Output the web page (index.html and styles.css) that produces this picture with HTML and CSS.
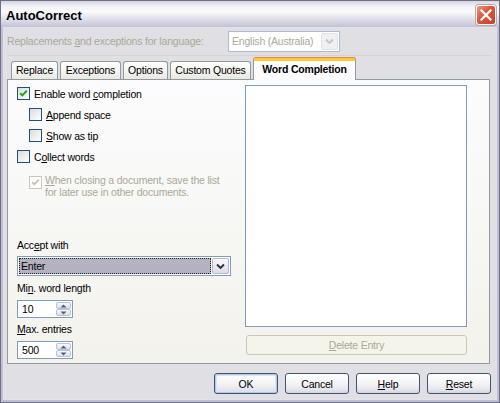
FILE: index.html
```html
<!DOCTYPE html>
<html>
<head>
<meta charset="utf-8">
<link rel="stylesheet" href="styles.css">
</head>
<body>
<div class="window">
  <div class="titlebar">
    <span class="title">AutoCorrect</span>
    <span class="close"><svg width="12" height="12" viewBox="0 0 12 12"><path d="M1.5 1.5 L10.5 10.5 M10.5 1.5 L1.5 10.5" stroke="#fff" stroke-width="2.2" stroke-linecap="square"/></svg></span>
  </div>
  <div class="client">
    <div class="langrow">
      <span class="langlbl dis">Replacements <u>a</u>nd exceptions for language:</span>
      <div class="combo combo-dis">
        <span class="combo-text dis">English (Australia)</span>
        <span class="ddbtn ddbtn-dis"><svg width="9" height="7" viewBox="0 0 9 7"><path d="M1 1.5 L4.5 5 L8 1.5" fill="none" stroke="#c3c3cc" stroke-width="1.8"/></svg></span>
      </div>
    </div>
    <div class="tabs">
      <div class="tab t-replace">Replace</div>
      <div class="tab t-exc">Exceptions</div>
      <div class="tab t-opt">Options</div>
      <div class="tab t-cq">Custom Quotes</div>
      <div class="tab active t-wc">Word Completion</div>
    </div>
    <div class="panel">
      <div class="leftcol">
        <div class="cbrow">
          <span class="cb"><svg width="11" height="11" viewBox="0 0 11 11"><path d="M2.2 5.2 L4.3 7.4 L8.8 2.8" fill="none" stroke="#21a121" stroke-width="2"/></svg></span>
          <span>Enable word <u>c</u>ompletion</span>
        </div>
        <div class="cbrow indent">
          <span class="cb"></span>
          <span><u>A</u>ppend space</span>
        </div>
        <div class="cbrow indent">
          <span class="cb"></span>
          <span><u>S</u>how as tip</span>
        </div>
        <div class="cbrow">
          <span class="cb"></span>
          <span>C<u>o</u>llect words</span>
        </div>
        <div class="cbrow2 indent">
          <span class="cb cb-dis"><svg width="11" height="11" viewBox="0 0 11 11"><path d="M2.2 5.2 L4.3 7.4 L8.8 2.8" fill="none" stroke="#cac8bb" stroke-width="2"/></svg></span>
          <span class="dis multiline"><u>W</u>hen closing a document, save the list<br>for later use in other documents.</span>
        </div>
        <div class="lbl lbl-accept">Acc<u>e</u>pt with</div>
        <div class="combo combo-enter">
          <span class="combo-sel">Enter</span>
          <span class="ddbtn"><svg width="9" height="7" viewBox="0 0 9 7"><path d="M1 1.5 L4.5 5 L8 1.5" fill="none" stroke="#2b2b3a" stroke-width="1.8"/></svg></span>
        </div>
        <div class="lbl lbl-min">Mi<u>n</u>. word length</div>
        <div class="spin">
          <span class="spin-text">10</span>
          <span class="spinbtns">
            <span class="sb"><svg width="7" height="4" viewBox="0 0 7 4"><path d="M0.5 3.5 L3.5 0.5 L6.5 3.5Z" fill="#4d6185"/></svg></span>
            <span class="sb"><svg width="7" height="4" viewBox="0 0 7 4"><path d="M0.5 0.5 L3.5 3.5 L6.5 0.5Z" fill="#4d6185"/></svg></span>
          </span>
        </div>
        <div class="lbl lbl-max"><u>M</u>ax. entries</div>
        <div class="spin spin2">
          <span class="spin-text">500</span>
          <span class="spinbtns">
            <span class="sb"><svg width="7" height="4" viewBox="0 0 7 4"><path d="M0.5 3.5 L3.5 0.5 L6.5 3.5Z" fill="#4d6185"/></svg></span>
            <span class="sb"><svg width="7" height="4" viewBox="0 0 7 4"><path d="M0.5 0.5 L3.5 3.5 L6.5 0.5Z" fill="#4d6185"/></svg></span>
          </span>
        </div>
      </div>
      <div class="rightcol">
        <div class="listbox"></div>
        <div class="btn btn-dis del"><span><u>D</u>elete Entry</span></div>
      </div>
    </div>
    <div class="buttons">
      <div class="btn default">OK</div>
      <div class="btn">Cancel</div>
      <div class="btn"><span><u>H</u>elp</span></div>
      <div class="btn"><span><u>R</u>eset</span></div>
    </div>
  </div>
</div>
</body>
</html>
```
FILE: styles.css
```css
* { box-sizing: border-box; }
html, body { margin: 0; padding: 0; }
body {
  width: 500px;
  height: 403px;
  overflow: hidden;
  font-family: "Liberation Sans", Arial, sans-serif;
  font-size: 10.5px;
  letter-spacing: -0.2px;
  color: #000;
  background: #c4c3d5;
  white-space: nowrap;
}
u { text-decoration: underline; text-underline-offset: 1px; }
.window {
  width: 500px;
  height: 403px;
  border: 1px solid #6f6e88;
  background: #c0bfd2;
  display: flex;
  flex-direction: column;
}
.titlebar {
  height: 27px;
  flex: none;
  display: flex;
  align-items: center;
  justify-content: space-between;
  padding: 0 3px 0 5px;
  background: linear-gradient(#d6d6e2 0%, #f2f2f7 20%, #fafafc 40%, #e6e6ee 60%, #cfcedd 85%, #bdbccf 100%);
}
.title { font-weight: bold; font-size: 13px; letter-spacing: 0; color: #000; padding-top: 1px; }
.close {
  width: 20px;
  height: 20px;
  border: 1px solid #fff;
  border-radius: 3px;
  background: linear-gradient(135deg, #ec9c84 0%, #dc5a3e 40%, #c8402a 100%);
  box-shadow: 0 0 0 1px #c9a4a4;
  display: flex;
  align-items: center;
  justify-content: center;
}
.client {
  flex: 1;
  margin: 0 3px 3px;
  background: #e0dfe3;
  display: flex;
  flex-direction: column;
  padding: 0 5px 0 3px;
  box-shadow: 0 0 0 1px #e4e3ec;
}
.dis { color: #aca899; }
.langrow {
  height: 28px;
  flex: none;
  display: flex;
  align-items: flex-start;
  padding-top: 3px;
  border-bottom: 1px solid #d4d3dc;
}
.langlbl { width: 221px; height: 21px; line-height: 21px; }
.combo {
  display: flex;
  align-items: stretch;
  border: 1px solid #7f9db9;
  background: #fff;
  flex: none;
}
.combo-dis {
  width: 112px;
  height: 21px;
  border-color: #a9bcd4;
  padding: 1px;
}
.combo-text { flex: 1; line-height: 17px; padding-left: 2px; }
.ddbtn {
  width: 17px;
  flex: none;
  display: flex;
  align-items: center;
  justify-content: center;
  border: 1px solid #b4b8d0;
  border-radius: 2px;
  background: linear-gradient(#f8f8fb, #dcdce6);
}
.ddbtn-dis {
  border-color: #e2e1e8;
  background: #f0f0f2;
}
.tabs {
  margin-top: 2px;
  height: 22px;
  flex: none;
  display: flex;
  align-items: flex-end;
  padding-left: 4px;
  margin-bottom: -1px;
}
.tab {
  height: 18px;
  flex: none;
  margin-bottom: 1px;
  margin-right: 2px;
  border: 1px solid #919b9c;
  border-bottom: none;
  border-radius: 3px 3px 0 0;
  background: linear-gradient(#ffffff, #f3f3ef 60%, #e9e8e2);
  text-align: center;
  line-height: 17px;
}
.t-replace { width: 47px; }
.t-exc { width: 61px; }
.t-opt { width: 45px; }
.t-cq { width: 81px; }
.t-wc { width: 103px; }
.tab.active {
  position: relative;
  z-index: 1;
  height: 22px;
  margin-bottom: 0;
  border-top: 3px solid #ffc83c;
  box-shadow: 0 -1px 0 #e68b2c;
  background: #fcfcfe;
  font-weight: bold;
  line-height: 17px;
}
.panel {
  width: 483px;
  height: 285px;
  flex: none;
  border: 1px solid #919b9c;
  background: linear-gradient(#fcfcfe 0%, #f8f8f6 40%, #f3f2ec 100%);
  display: flex;
}
.leftcol {
  width: 214px;
  flex: none;
  margin-left: 9px;
  padding-top: 3px;
  display: flex;
  flex-direction: column;
}
.leftcol > * { flex: none; }
.cbrow {
  height: 21px;
  display: flex;
  align-items: center;
  gap: 4px;
}
.cbrow2 {
  margin-top: 5px;
  display: flex;
  align-items: flex-start;
  gap: 3px;
}
.cbrow2 .cb { margin-top: 4px; }
.multiline { line-height: 12px; padding-top: 2px; }
.indent { padding-left: 12px; }
.cb {
  width: 13px;
  height: 13px;
  flex: none;
  border: 1px solid #1c5180;
  background: linear-gradient(135deg, #dcdcd7, #ffffff);
  display: flex;
  align-items: center;
  justify-content: center;
}
.cb-dis { border-color: #cac8bb; background: #fff; }
.lbl { height: 13px; line-height: 13px; }
.lbl-accept { margin-top: 41px; }
.combo-enter {
  margin-top: 4px;
  width: 214px;
  height: 20px;
  padding: 1px;
}
.combo-sel {
  flex: 1;
  background: #b3b2be;
  border: 1px dotted #222;
  line-height: 14px;
  padding-left: 1px;
  margin-right: 1px;
}
.lbl-min { margin-top: 6px; }
.lbl-max { margin-top: 5px; }
.spin {
  margin-top: 5px;
  width: 56px;
  height: 18px;
  border: 1px solid #7f9db9;
  background: #fff;
  display: flex;
  padding: 1px;
}
.spin2 { margin-top: 5px; }
.spin-text { flex: 1; line-height: 14px; padding-left: 3px; }
.spinbtns { width: 15px; display: flex; flex-direction: column; }
.sb {
  flex: 1;
  border: 1px solid #b7c3da;
  border-radius: 2px;
  background: linear-gradient(#fafafc, #dcdce6);
  display: flex;
  align-items: center;
  justify-content: center;
}
.rightcol {
  width: 222px;
  flex: none;
  margin-left: 14px;
  padding-top: 5px;
  display: flex;
  flex-direction: column;
}
.listbox {
  height: 242px;
  flex: none;
  border: 1px solid #7f9db9;
  background: #fff;
}
.btn {
  width: 64px;
  height: 21px;
  flex: none;
  border: 1px solid #3f5473;
  border-radius: 3px;
  background: linear-gradient(#ffffff 0%, #f4f4f7 50%, #e4e3ea 85%, #d4d3de 100%);
  display: flex;
  align-items: center;
  justify-content: center;
}
.btn.default { box-shadow: inset 0 0 0 1px #b6c8e8, inset 0 0 0 2px #dbe4f4; }
.btn-dis {
  border-color: #c9c7ba;
  background: #f5f4ea;
  color: #aca899;
}
.del {
  width: 221px;
  height: 20px;
  margin-top: 8px;
  margin-left: 1px;
}
.buttons {
  margin-top: 9px;
  display: flex;
  justify-content: flex-end;
  gap: 7px;
}
```
